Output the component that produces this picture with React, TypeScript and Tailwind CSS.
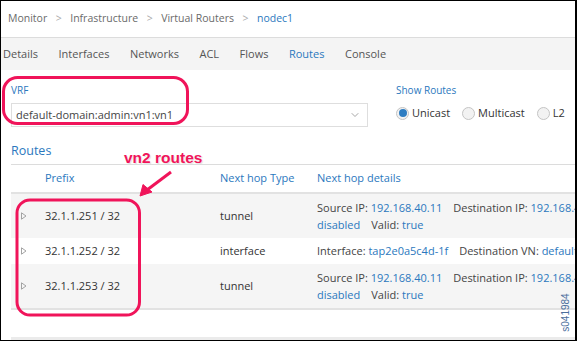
import { ChevronDown } from 'lucide-react';

const blue = 'text-[#2b78be]';

function Radio({ label, checked }: { label: string; checked?: boolean }) {
  return (
    <div className="flex items-center gap-[3px]">
      <span className="w-[13px] h-[13px] rounded-full border border-[#c4c4c4] bg-[#f2f2f2] flex items-center justify-center">
        {checked && <span className="w-[8px] h-[8px] rounded-full bg-[#2e7dc2]" />}
      </span>
      <span className="text-[11px] text-[#333]">{label}</span>
    </div>
  );
}

function Expander() {
  return (
    <svg width="6" height="8" viewBox="0 0 6 8" className="ml-[10px]">
      <path d="M0.5 0.8 L5 4 L0.5 7.2 Z" fill="none" stroke="#9a9a9a" strokeWidth="0.9" />
    </svg>
  );
}

function Pair({ k, v }: { k: string; v: string }) {
  return (
    <span className="mr-[11px] whitespace-nowrap">
      <span className="text-[#444]">{k} </span>
      <span className={blue}>{v}</span>
    </span>
  );
}

export default function App() {
  const rows = [
    { prefix: '32.1.1.251 / 32', type: 'tunnel', kind: 'tunnel', cls: 'bg-[#f5f5f5] h-[44px]' },
    { prefix: '32.1.1.252 / 32', type: 'interface', kind: 'iface', cls: 'bg-white h-[26px]' },
    { prefix: '32.1.1.253 / 32', type: 'tunnel', kind: 'tunnel', cls: 'bg-[#f5f5f5] h-[46px] border-b-2 border-[#e2e2e2]' },
  ];

  return (
    <div className="relative w-[577px] h-[341px] overflow-hidden bg-white border-t border-l border-b border-r-2 border-black font-['Open_Sans',sans-serif] flex flex-col">
      {/* breadcrumb */}
      <div className="h-[37px] shrink-0 flex items-center pl-[7px] text-[10.5px] text-[#6a6a6a] border-b border-[#dcdcdc]">
        <span>Monitor</span>
        <span className="mx-[8.5px] text-[#aaa]">&gt;</span>
        <span>Infrastructure</span>
        <span className="mx-[8.5px] text-[#aaa]">&gt;</span>
        <span>Virtual Routers</span>
        <span className="mx-[8.5px] text-[#aaa]">&gt;</span>
        <span className={blue}>nodec1</span>
      </div>

      {/* tabs */}
      <div className="h-[32px] shrink-0 bg-[#f4f4f4] flex items-center gap-[20.5px] pl-[2px] text-[11px] text-[#555]">
        <span>Details</span>
        <span>Interfaces</span>
        <span>Networks</span>
        <span>ACL</span>
        <span>Flows</span>
        <span className={blue}>Routes</span>
        <span>Console</span>
      </div>

      <div className="flex-1 flex flex-col pl-[10px]">
        {/* filter row */}
        <div className="flex pt-[13px]">
          <div className="w-[357px]">
            <div className={`text-[10px] leading-[14px] ${blue}`}>VRF</div>
            <div className="mt-[6px] h-[24px] border border-[#dedede] flex items-center justify-between pl-[4px] pr-[6px]">
              <span className="text-[11px] text-[#444]">default-domain:admin:vn1:vn1</span>
              <ChevronDown size={12} strokeWidth={1.5} className="text-[#888]" />
            </div>
          </div>
          <div className="ml-[28px]">
            <div className={`text-[10px] leading-[14px] ${blue}`}>Show Routes</div>
            <div className="mt-[8px] flex items-center gap-[12px]">
              <Radio label="Unicast" checked />
              <Radio label="Multicast" />
              <Radio label="L2" />
            </div>
          </div>
        </div>

        {/* routes section */}
        <div className={`mt-[15px] text-[12.5px] leading-[18px] pb-[4px] border-b border-[#dcdcdc] ${blue}`}>Routes</div>

        <div className="grid grid-cols-[34px_175px_97px_1fr] h-[29px] items-center text-[11px] border-b-2 border-[#e2e2e2]">
          <span />
          <span className={blue}>Prefix</span>
          <span className={blue}>Next hop Type</span>
          <span className={`${blue} whitespace-nowrap`}>Next hop details</span>
        </div>

        {rows.map((r) => (
          <div
            key={r.prefix}
            className={`grid grid-cols-[34px_175px_97px_1fr] items-center text-[11px] text-[#333] ${r.cls}`}
          >
            <Expander />
            <span>{r.prefix}</span>
            <span>{r.type}</span>
            {r.kind === 'tunnel' ? (
              <div className="leading-[17px] overflow-hidden">
                <div className="whitespace-nowrap">
                  <Pair k="Source IP:" v="192.168.40.11" />
                  <Pair k="Destination IP:" v="192.168.40.12" />
                </div>
                <div className="whitespace-nowrap">
                  <span className={`${blue} mr-[11px]`}>disabled</span>
                  <Pair k="Valid:" v="true" />
                </div>
              </div>
            ) : (
              <div className="overflow-hidden whitespace-nowrap">
                <Pair k="Interface:" v="tap2e0a5c4d-1f" />
                <Pair k="Destination VN:" v="default-domain:admin:vn1" />
              </div>
            )}
          </div>
        ))}

        <div className="mt-auto h-[3px] bg-[#ebebeb]" />
      </div>

      {/* figure id */}
      <div className="absolute right-[4px] bottom-[7px] w-[12px] h-[42px] flex items-center justify-center">
        <span className="-rotate-90 text-[10px] text-[#4b6e9c] font-['Liberation_Sans',sans-serif] whitespace-nowrap">s041984</span>
      </div>

      {/* annotation callouts */}
      <svg className="absolute left-[-1px] top-[-1px] pointer-events-none" width="577" height="341" viewBox="0 0 577 341">
        <rect x="3.5" y="77.5" width="184" height="46" rx="14" fill="none" stroke="#f0145a" strokeWidth="3" />
        <rect x="17" y="200" width="122.5" height="115" rx="13" fill="none" stroke="#f0145a" strokeWidth="3" />
        <line x1="171" y1="172" x2="147" y2="190" stroke="#f0145a" strokeWidth="3" />
        <path d="M140 196 L143 184.5 L152 192 Z" fill="#f0145a" stroke="#f0145a" strokeWidth="1" />
      </svg>
      <div className="absolute left-[123px] top-[147px] text-[15.5px] font-bold leading-[20px] text-[#f0145a] font-['Liberation_Sans',sans-serif] [text-shadow:0_0_2px_#fff,1px_1px_1px_#ddd]">
        vn2 routes
      </div>
    </div>
  );
}
